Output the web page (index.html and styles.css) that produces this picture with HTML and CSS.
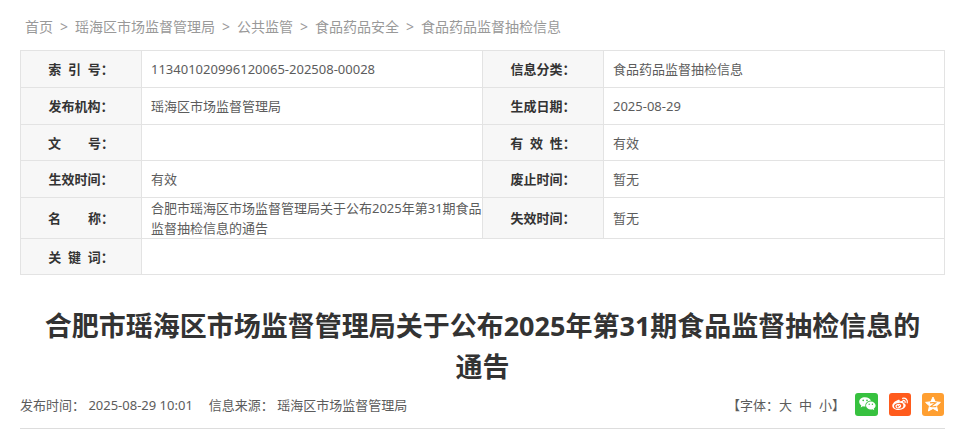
FILE: index.html
```html
<!DOCTYPE html>
<html lang="zh-CN">
<head>
<meta charset="utf-8">
<meta name="viewport" content="width=device-width, initial-scale=1">
<title>合肥市瑶海区市场监督管理局关于公布2025年第31期食品监督抽检信息的通告</title>
<link rel="stylesheet" href="styles.css">
</head>
<body>
<nav class="breadcrumb">
  <a href="#">首页</a><span>&gt;</span>
  <a href="#">瑶海区市场监督管理局</a><span>&gt;</span>
  <a href="#">公共监管</a><span>&gt;</span>
  <a href="#">食品药品安全</a><span>&gt;</span>
  <a href="#">食品药品监督抽检信息</a>
</nav>
<main>
  <table class="info">
    <colgroup><col class="label-col"><col><col class="label-col"><col></colgroup>
    <tbody>
      <tr>
        <th scope="row">索&nbsp;&nbsp;引&nbsp;&nbsp;号：</th><td>113401020996120065-202508-00028</td>
        <th scope="row">信息分类：</th><td>食品药品监督抽检信息</td>
      </tr>
      <tr>
        <th scope="row">发布机构：</th><td>瑶海区市场监督管理局</td>
        <th scope="row">生成日期：</th><td>2025-08-29</td>
      </tr>
      <tr class="compact">
        <th scope="row">文&nbsp;&nbsp;&nbsp;&nbsp;&nbsp;&nbsp;&nbsp;&nbsp;号：</th><td></td>
        <th scope="row">有&nbsp;&nbsp;效&nbsp;&nbsp;性：</th><td>有效</td>
      </tr>
      <tr>
        <th scope="row">生效时间：</th><td>有效</td>
        <th scope="row">废止时间：</th><td>暂无</td>
      </tr>
      <tr>
        <th scope="row">名&nbsp;&nbsp;&nbsp;&nbsp;&nbsp;&nbsp;&nbsp;&nbsp;称：</th><td>合肥市瑶海区市场监督管理局关于公布2025年第31期食品监督抽检信息的通告</td>
        <th scope="row">失效时间：</th><td>暂无</td>
      </tr>
      <tr class="compact">
        <th scope="row">关&nbsp;&nbsp;键&nbsp;&nbsp;词：</th><td colspan="3"></td>
      </tr>
    </tbody>
  </table>
  <h1>合肥市瑶海区市场监督管理局关于公布2025年第31期食品监督抽检信息的通告</h1>
  <div class="meta">
    <div class="source">
      <span>发布时间： 2025-08-29 10:01</span>
      <span>信息来源： 瑶海区市场监督管理局</span>
    </div>
    <div class="tools">
      <div class="font-size">【字体：<span class="sizes"><button type="button">大</button><button type="button">中</button><button type="button">小</button></span>】</div>
      <div class="share">
        <a class="wechat" href="#" aria-label="微信">
          <svg viewBox="0 0 22 22" aria-hidden="true">
            <path fill="#fff" d="M9 4.200C5.700 4.200 3.200 6.200 3.200 8.800c0 1.500.8 2.800 2.100 3.700l-.6 1.900 2.200-1.200c.7.200 1.400.3 2.100.3h.5c-.8-3.200 2-5.900 5.400-5.800C14.300 5.700 11.900 4.200 9 4.200z"/>
            <path fill="#fff" d="M19.600 12.500c0-2.300-2.200-4-4.800-4s-4.800 1.700-4.800 4 2.200 4 4.800 4c.6 0 1.200-.1 1.700-.3l1.800 1-.5-1.600c1.100-.7 1.800-1.800 1.800-3.100z"/>
            <g fill="#37c13f"><circle cx="7.200" cy="7.400" r=".8"/><circle cx="11" cy="7.400" r=".8"/><circle cx="13.200" cy="11.300" r=".7"/><circle cx="16.400" cy="11.300" r=".7"/></g>
          </svg>
        </a>
        <a class="weibo" href="#" aria-label="微博">
          <svg viewBox="0 0 22 22" aria-hidden="true">
            <path fill="#fff" d="M8.900 7c1.300-.5 2.200.1 1.900 1.500 2.300-.9 4.200-.6 3.700 1.400 1.500.5 2.200 1.300 2.200 2.400 0 2.500-3 4.700-6.900 4.700-3.800 0-6.500-1.800-6.500-4.300C3.300 10.500 6.200 7.900 8.900 7z"/>
            <ellipse cx="9.700" cy="12.900" rx="4.700" ry="3" fill="#ff5b1c" transform="rotate(-8 9.700 12.900)"/>
            <ellipse cx="9.300" cy="13.100" rx="2.900" ry="2.300" fill="#fff" transform="rotate(-15 9.300 13.100)"/>
            <circle cx="8.700" cy="13.500" r="1" fill="#ff5b1c"/><circle cx="10.500" cy="12.600" r=".5" fill="#ff5b1c"/>
            <path fill="none" stroke="#fff" stroke-width="1.200" stroke-linecap="round" d="M13.600 5.300c3.100-.7 5.400 1.600 4.600 4.600M13.900 7.400c1.500-.3 2.600.8 2.200 2.200"/>
          </svg>
        </a>
        <a class="qzone" href="#" aria-label="QQ空间">
          <svg viewBox="0 0 22 22" aria-hidden="true">
            <path fill="#fff" stroke="#fff" stroke-linejoin="round" d="M11 4l2.200 4.800 5.200.6-3.900 3.500 1.100 5.100-4.600-2.600L6.400 18l1.100-5.100-3.900-3.500 5.200-.6z"/>
            <path fill="none" stroke="#ff9f31" stroke-width="1.100" d="M8 9.900c2-.4 4-.4 5.800-.1L8.700 13.500c2 .3 4 .3 5.700-.1"/>
          </svg>
        </a>
      </div>
    </div>
  </div>
</main>
</body>
</html>
```

FILE: styles.css
```css
* {
  box-sizing: border-box;
}

body {
  margin: 0;
  padding: 0 21px 0 20px;
  background: #fff;
  color: #5c5c5c;
  font: 13px/20px "Noto Sans", "Noto Sans CJK SC", sans-serif;
}

a {
  color: inherit;
  text-decoration: none;
}

.breadcrumb {
  display: flex;
  flex-wrap: wrap;
  gap: 7px;
  padding: 17px 5px 13px;
  color: #999;
  font-size: 14px;
}

.info {
  width: 100%;
  border-collapse: collapse;
  table-layout: fixed;
}

.label-col {
  width: 121px;
}

.info tr {
  height: 37px;
}

.info .compact {
  height: 36px;
}

.info th,
.info td {
  border: 1px solid #e3e3e3;
  padding: 0;
}

.info th {
  background: #f7f7f7;
  color: #333;
  font-weight: bold;
  text-align: center;
}

.info td {
  padding-left: 9px;
}

h1 {
  margin: 30px 0 0;
  padding: 0 20px;
  color: #333;
  font-size: 27px;
  line-height: 41px;
  text-align: center;
}

.meta {
  display: flex;
  align-items: center;
  justify-content: space-between;
  padding: 6px 0 12px;
  border-bottom: 1px solid #ddd;
}

.source {
  display: flex;
  gap: 16px;
}

.tools {
  display: flex;
  align-items: center;
  gap: 10px;
  padding-right: 1px;
}

.font-size,
.sizes {
  display: flex;
}

.sizes {
  gap: 7px;
}

.sizes button {
  padding: 0;
  border: 0;
  background: none;
  color: inherit;
  font: inherit;
  cursor: pointer;
}

.share {
  display: flex;
  gap: 11px;
}

.share a {
  display: flex;
  justify-content: center;
  width: 22px;
  height: 23px;
  border-radius: 3px;
}

.share .wechat {
  width: 23px;
}

.share svg {
  width: 22px;
  height: 22px;
}

.wechat {
  background: #37c13f;
}

.weibo {
  background: #ff5b1c;
}

.qzone {
  background: #ff9f31;
}
```
